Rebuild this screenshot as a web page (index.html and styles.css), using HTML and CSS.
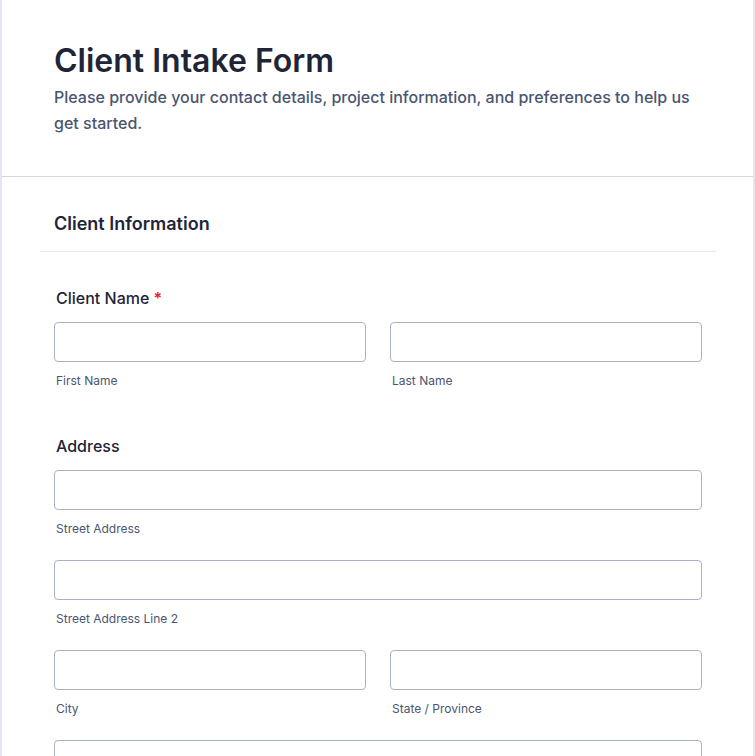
FILE: index.html
```html
<!DOCTYPE html>
<html lang="en">
<head>
<meta charset="utf-8">
<title>Client Intake Form</title>
<link rel="stylesheet" href="styles.css">
</head>
<body>
<main class="card">
  <header class="form-header">
    <h1 class="form-title">Client Intake Form</h1>
    <p class="form-subtitle">Please provide your contact details, project information, and preferences to help us get started.</p>
  </header>
  <section class="section">
    <div class="section-head">
      <h2 class="section-title">Client Information</h2>
    </div>
    <div class="fields">
      <div class="field">
        <div class="field-label">Client Name <span class="req">*</span></div>
        <div class="row two">
          <div class="sub">
            <input class="input" type="text">
            <div class="sub-label">First Name</div>
          </div>
          <div class="sub">
            <input class="input" type="text">
            <div class="sub-label">Last Name</div>
          </div>
        </div>
      </div>
      <div class="field">
        <div class="field-label">Address</div>
        <div class="row">
          <div class="sub">
            <input class="input" type="text">
            <div class="sub-label">Street Address</div>
          </div>
        </div>
        <div class="row">
          <div class="sub">
            <input class="input" type="text">
            <div class="sub-label">Street Address Line 2</div>
          </div>
        </div>
        <div class="row two">
          <div class="sub">
            <input class="input" type="text">
            <div class="sub-label">City</div>
          </div>
          <div class="sub">
            <input class="input" type="text">
            <div class="sub-label">State / Province</div>
          </div>
        </div>
        <div class="row">
          <div class="sub">
            <input class="input" type="text">
          </div>
        </div>
      </div>
    </div>
  </section>
</main>
</body>
</html>
```

FILE: styles.css
```css
* { box-sizing: border-box; }

html, body {
  margin: 0;
  padding: 0;
}

body {
  background: #e4e6f5;
  font-family: Inter, "Noto Sans", "Liberation Sans", sans-serif;
  color: #1f2537;
}

.card {
  margin: 0 2px;
  background: #ffffff;
  min-height: 756px;
}

.form-header {
  padding: 41px 52px 40px;
  border-bottom: 1px solid #d4d5e6;
}

.form-title {
  margin: 0;
  font-size: 32px;
  line-height: 40px;
  font-weight: 600;
  color: #1f2537;
}

.form-subtitle {
  margin: 3px 0 0;
  font-size: 16px;
  line-height: 26px;
  font-weight: 500;
  color: #4a5572;
}

.section {
  padding: 33px 37px 0 38px;
}

.section-head {
  padding: 0 14px 13px;
  border-bottom: 1px solid #e7e8ee;
}

.section-title {
  margin: 0;
  font-size: 18px;
  line-height: 28px;
  font-weight: 600;
  color: #1f2537;
}

.fields {
  padding: 34px 14px 0;
}

.field {
  margin-bottom: 45px;
}

.field-label {
  padding-left: 2px;
  font-size: 16px;
  line-height: 24px;
  font-weight: 500;
  color: #1f2537;
  margin-bottom: 12px;
}

.req {
  color: #e3262b;
  font-weight: 600;
}

.row {
  display: grid;
  grid-template-columns: 1fr;
  gap: 24px;
  margin-bottom: 23px;
}

.row:last-child {
  margin-bottom: 0;
}

.row.two {
  grid-template-columns: 1fr 1fr;
}

.input {
  display: block;
  width: 100%;
  height: 40px;
  margin: 0;
  border: 1px solid #aab1c5;
  border-radius: 4px;
  background: #ffffff;
  font: inherit;
}

.sub-label {
  margin-top: 11px;
  padding-left: 2px;
  font-size: 12px;
  line-height: 16px;
  color: #4b5570;
}
```
